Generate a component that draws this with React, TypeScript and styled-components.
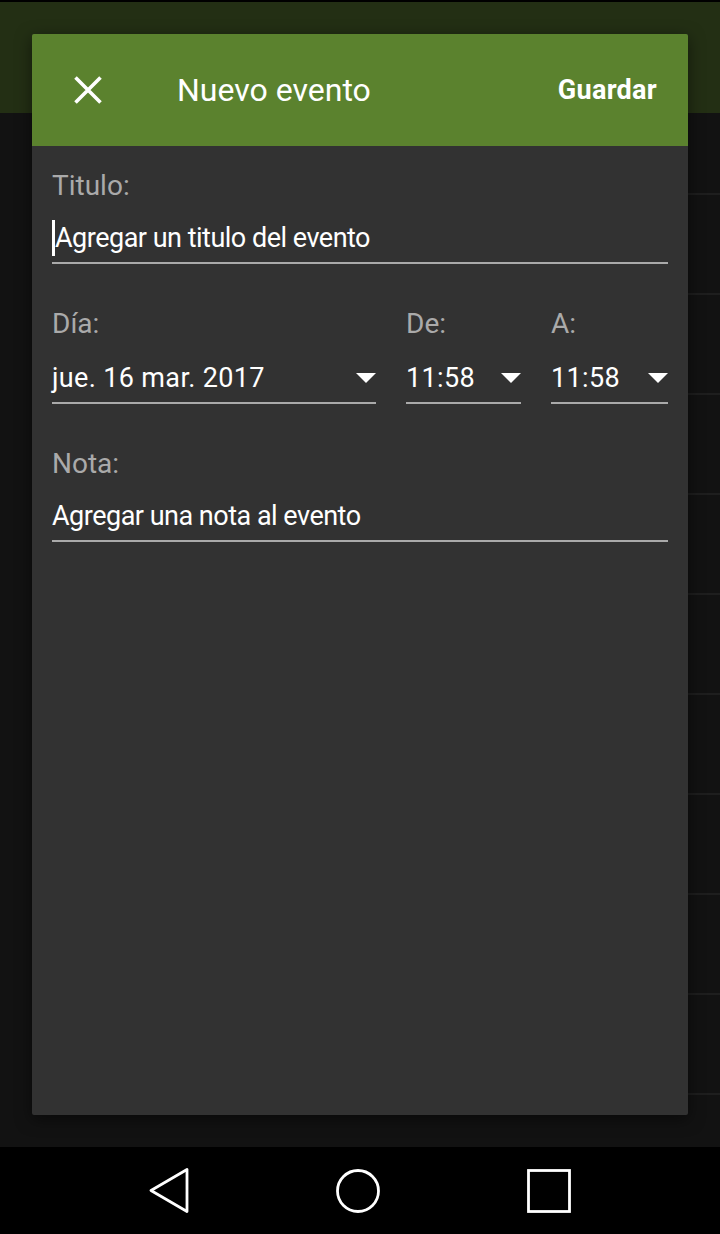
import React from "react";
import styled, { createGlobalStyle } from "styled-components";

const Global = createGlobalStyle`
  html, body { margin: 0; padding: 0; background: #121212; }
  body { font-family: Roboto, "Noto Sans", sans-serif; }
  * { box-sizing: border-box; }
`;

const Screen = styled.div`
  width: 720px;
  height: 1234px;
  display: flex;
  flex-direction: column;
  background: #121212;
  position: relative;
  overflow: hidden;
`;

const StatusStrip = styled.div`
  height: 2px;
  flex-shrink: 0;
  background: #000;
`;

const AppBar = styled.div`
  height: 111px;
  flex-shrink: 0;
  background: #232f14;
`;

const ListArea = styled.div`
  flex: 1;
  min-height: 0;
  overflow: hidden;
  display: flex;
  flex-direction: column;
  padding-top: 80px;
`;

const ListRow = styled.div`
  height: 100px;
  flex-shrink: 0;
  margin-left: 80px;
  border-top: 2px solid #1e1e1e;
`;

const NavBar = styled.div`
  height: 87px;
  flex-shrink: 0;
  background: #000;
  display: flex;
  justify-content: center;
  align-items: center;
  gap: 147px;
`;

const Overlay = styled.div`
  position: absolute;
  left: 32px;
  top: 34px;
  width: 656px;
  height: 1081px;
  background: #323232;
  border-radius: 2px;
  display: flex;
  flex-direction: column;
  box-shadow: 0 4px 16px rgba(0, 0, 0, 0.5);
`;

const Header = styled.div`
  height: 112px;
  flex-shrink: 0;
  background: #5b822e;
  border-radius: 2px 2px 0 0;
  display: flex;
  align-items: center;
  padding: 0 31px 0 42px;
`;

const CloseBtn = styled.div`
  width: 28px;
  height: 28px;
  display: flex;
  align-items: center;
  justify-content: center;
`;

const Title = styled.div`
  margin-left: 75px;
  flex: 1;
  color: #fff;
  font-size: 32px;
  font-weight: 400;
`;

const Save = styled.div`
  color: #fff;
  font-size: 27px;
  font-weight: 700;
  letter-spacing: 0.3px;
`;

const Body = styled.div`
  padding: 24px 20px 0 20px;
  display: flex;
  flex-direction: column;
`;

const Label = styled.div`
  color: #aaaaaa;
  font-size: 28px;
  line-height: 32px;
  letter-spacing: 0px;
`;

const Field = styled.div<{ $gap: number }>`
  display: flex;
  align-items: center;
  height: 50px;
  margin-top: ${(p) => p.$gap}px;
  border-bottom: 2px solid #aaaaaa;
  color: #fff;
  font-size: 27px;
  letter-spacing: -0.5px;
`;

const ValueField = styled(Field)`
  justify-content: space-between;
  letter-spacing: 0.35px;
`;

const Cursor = styled.span`
  display: inline-block;
  width: 3px;
  height: 36px;
  background: #fff;
`;

const Row = styled.div`
  display: flex;
  gap: 30px;
  margin-top: 44px;
`;

const Col = styled.div<{ $w: number }>`
  width: ${(p) => p.$w}px;
  display: flex;
  flex-direction: column;
`;

const Section = styled.div<{ $mt: number }>`
  margin-top: ${(p) => p.$mt}px;
  display: flex;
  flex-direction: column;
`;

const Caret = () => (
  <svg width="20" height="10" viewBox="0 0 20 10">
    <path d="M0 0 L20 0 L10 10 Z" fill="#fff" />
  </svg>
);

const Dropdown = ({ value }: { value: string }) => (
  <ValueField $gap={14}>
    <span>{value}</span>
    <Caret />
  </ValueField>
);

export default function App() {
  return (
    <>
      <Global />
      <Screen>
        <StatusStrip />
        <AppBar />
        <ListArea>
          {Array.from({ length: 10 }).map((_, i) => (
            <ListRow key={i} />
          ))}
        </ListArea>
        <NavBar>
          <svg width="40" height="45" viewBox="0 0 40 45">
            <path d="M38 1.5 L38 43.5 L2 22.5 Z" fill="none" stroke="#fff" strokeWidth="2.8" strokeLinejoin="round" />
          </svg>
          <svg width="44" height="44" viewBox="0 0 44 44">
            <circle cx="22" cy="22" r="20.5" fill="none" stroke="#fff" strokeWidth="2.8" />
          </svg>
          <svg width="44" height="44" viewBox="0 0 44 44">
            <rect x="1.5" y="1.5" width="41" height="41" fill="none" stroke="#fff" strokeWidth="2.8" />
          </svg>
        </NavBar>
        <Overlay>
          <Header>
            <CloseBtn>
              <svg width="28" height="28" viewBox="0 0 28 28">
                <path d="M1.5 1.5 L26.5 26.5 M26.5 1.5 L1.5 26.5" stroke="#fff" strokeWidth="3.6" />
              </svg>
            </CloseBtn>
            <Title>Nuevo evento</Title>
            <Save>Guardar</Save>
          </Header>
          <Body>
            <Section $mt={0}>
              <Label>Titulo:</Label>
              <Field $gap={12}>
                <Cursor />
                <span>Agregar un titulo del evento</span>
              </Field>
            </Section>
            <Row>
              <Col $w={324}>
                <Label>Día:</Label>
                <Dropdown value="jue. 16 mar. 2017" />
              </Col>
              <Col $w={115}>
                <Label>De:</Label>
                <Dropdown value="11:58" />
              </Col>
              <Col $w={117}>
                <Label>A:</Label>
                <Dropdown value="11:58" />
              </Col>
            </Row>
            <Section $mt={44}>
              <Label>Nota:</Label>
              <Field $gap={12}>
                <span>Agregar una nota al evento</span>
              </Field>
            </Section>
          </Body>
        </Overlay>
      </Screen>
    </>
  );
}
